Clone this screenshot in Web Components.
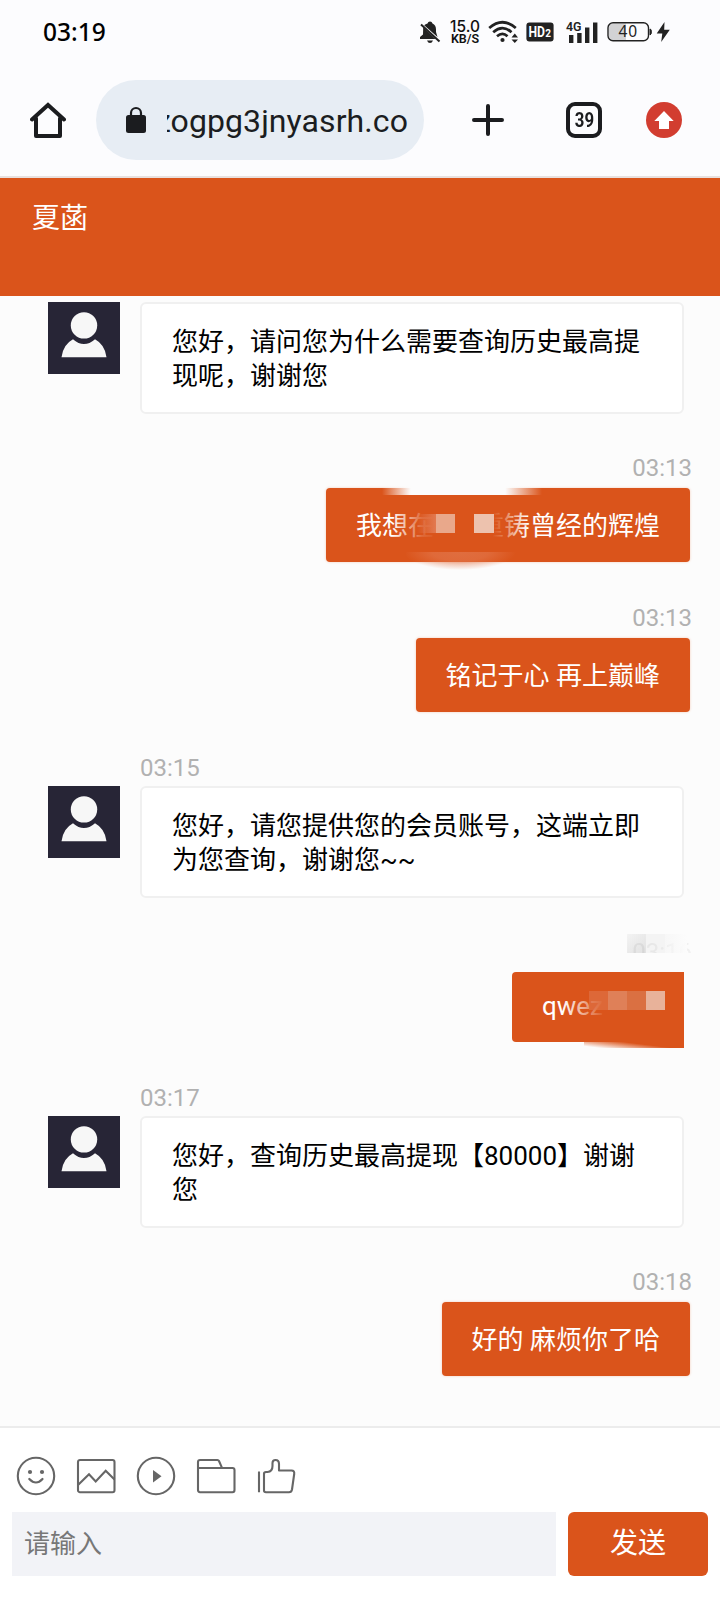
<!DOCTYPE html>
<html lang="zh-CN">
<head>
<meta charset="utf-8">
<title>夏菡</title>
<style>
html,body{margin:0;padding:0}
body{width:720px;height:1600px;overflow:hidden;background:#fcfcfc;font-family:Roboto,"Noto Sans CJK SC",sans-serif;color:#000}
chat-app{height:1600px}
</style>
</head>
<body>
<chat-app></chat-app>
<script>
function define(name, html){
  const t = document.createElement('template');
  t.innerHTML = html;
  customElements.define(name, class extends HTMLElement{
    constructor(){
      super();
      this.attachShadow({mode:'open'}).appendChild(t.content.cloneNode(true));
    }
    connectedCallback(){
      const time = this.shadowRoot.querySelector('.time');
      if(time) time.textContent = this.getAttribute('time') || '';
    }
  });
}

define('status-bar', `<style>
:host{display:flex;height:64px;box-sizing:border-box;padding:0 49px 0 43px;align-items:center;color:#222;background:#fcfcfe}
.clock{font:500 24.5px/64px "Noto Sans",sans-serif;color:#000;flex:1}
svg{display:block;flex:none;overflow:visible}
.rate{width:34px;margin:0 6px 0 7px;text-align:center;font:500 15.5px/13px Inter,sans-serif;color:#111}
.rate small{display:block;font:600 12.5px/11px Roboto,sans-serif}
</style>
<span class="clock">03:19</span>
<svg width="22" height="24" viewBox="0 0 22 24" fill="#222"><path d="M8.5 3.5 Q9 1.5 11 1.5 Q13 1.5 13.5 3.5 Q17 5 17 9.5 V12 L18.5 17 L5.2 5.2 Q6.5 4 8.5 3.5Z M4.2 7.2 L16.5 19 H1 V17 L4 14.5Z M8 20.5 H14 Q13 23 11 23 Q9 23 8 20.5Z"/><path d="M2 4.5 L20.5 21.5" stroke="#222" stroke-width="2"/></svg>
<div class="rate">15.0<small>KB/S</small></div>
<svg width="32" height="24" viewBox="0 0 32 24" fill="none" stroke="#222" stroke-width="2.7"><path d="M1.2 8 Q14.5 -3.5 27.8 8M5.2 12.2 Q14.5 4 23.5 12.2M9 16.3 Q14.5 11.5 19.5 16.3"/><circle cx="14.5" cy="20" r="2.1" fill="#222" stroke="none"/><path d="M23.5 17.5 L26.8 13.4 L30 17.5Z M23.5 19.5 H30 L26.8 23Z" fill="#222" stroke="none"/></svg>
<svg style="margin-left:6px" width="28" height="20" viewBox="0 0 28 20"><rect x=".4" y=".4" width="27.2" height="19" rx="3" fill="#222"/><text x="2.5" y="14.5" font-family="Roboto" font-weight="700" font-size="14.5" fill="#fff" textLength="16.5" lengthAdjust="spacingAndGlyphs">HD</text><text x="19.2" y="15" font-family="Roboto" font-weight="700" font-size="10" fill="#fff">2</text></svg>
<svg style="margin-left:12px" width="33" height="24" viewBox="0 0 33 24"><text x="0" y="11.3" font-family="Roboto" font-weight="600" font-size="13.5" fill="#222" textLength="15.5" lengthAdjust="spacingAndGlyphs">4G</text><path d="M3 15h4.4v8H3zM11.2 13h4.4v10h-4.4zM19 7.5h4.4v15.5H19zM27 2.5h4.4v20.5H27z" fill="#222"/></svg>
<svg style="margin-left:8px" width="45" height="22" viewBox="0 0 45 22"><path d="M6 2.5h13v17H6a4 4 0 0 1-4-4V6a4 4 0 0 1 4-3.5z" fill="#d2d2d4"/><rect x="1" y="1.8" width="40.5" height="18" rx="5" fill="none" stroke="#222" stroke-width="1.4"/><path d="M43 8q1.4 0 1.4 2.8T43 14z" fill="#222" stroke="#222"/><text x="11.5" y="16.2" font-family="Noto Sans" font-size="15.5" fill="#222" textLength="18.5">40</text></svg>
<svg style="margin-left:4px" width="15" height="22" viewBox="0 0 15 22"><path d="M8.5 1 L.7 12.5 H6.3 L5.2 21 L13.8 8.8 H8.2Z" fill="#222"/></svg>
`);

define('browser-bar', `<style>
:host{display:flex;height:114px;box-sizing:border-box;padding:16px 38px 16px 30px;border-bottom:2px solid #e8e0de;align-items:center;background:#fcfcfe}
svg{display:block;flex:none}
.url{display:flex;align-items:center;width:328px;height:80px;border-radius:40px;background:#e7edf4;margin-left:30px;box-sizing:border-box;padding:2px 16px 0 29px}
.url svg{margin-top:-2px}
.clip{margin-left:20px;width:241px;overflow:hidden;display:flex;justify-content:flex-end;font-size:32px;letter-spacing:.08px;line-height:44px;color:#1b1d21;white-space:nowrap}
.tabs{width:36px;height:36px;box-sizing:border-box;border:4px solid #1b1c1f;border-radius:9px;margin:0 44px 0 62px;text-align:center;font:700 20px/28px Roboto,sans-serif;color:#1b1c1f}
.tabs span{display:inline-block;transform:scaleX(.84)}
</style>
<svg width="36" height="36" viewBox="0 0 36 36" fill="none" stroke="#1b1c1f" stroke-width="4" stroke-linejoin="round" stroke-linecap="round"><path d="M6 16.5V34H30V16.5"/><path d="M2 17.5 L18 3 L34 17.5" stroke-linejoin="miter"/></svg>
<div class="url"><svg width="22" height="28" viewBox="0 0 22 28"><path d="M6 10V7a5 5 0 0 1 10 0V10" fill="none" stroke="#1b1c1f" stroke-width="2.2"/><rect x="1" y="9" width="20" height="18" rx="2.5" fill="#1b1c1f"/></svg>
<div class="clip"><span>zogpg3jnyasrh.co</span></div></div>
<svg style="margin-left:48px" width="32" height="32" viewBox="0 0 32 32" stroke="#1b1c1f" stroke-width="4" stroke-linecap="round"><path d="M16 2V30M2 16H30"/></svg>
<div class="tabs"><span>39</span></div>
<svg width="36" height="36" viewBox="0 0 36 36"><circle cx="18" cy="18" r="18" fill="#d23d30"/><path d="M18 9 L27.7 19 H23 V27 H13 V19 H8.3Z" fill="#fff"/></svg>
`);

define('chat-header', `<style>
:host{display:block;height:118px;box-sizing:border-box;padding:21px 32px;background:#da541b;color:#fff;font-size:28px;line-height:40px}
</style><slot></slot>`);

define('msg-in', `<style>
:host{display:grid;grid-template-columns:72px 544px;column-gap:20px;margin-left:48px;padding-top:44px}
.time{grid-column:2;height:30px;line-height:24px;font-size:24px;color:#b1b1b1}
svg{grid-column:1;display:block}
.bubble{grid-column:2;box-sizing:border-box;border:2px solid #f0f0f0;border-radius:6px;background:#fff;padding:21px 30px 19px;font-size:26px;line-height:34px;min-height:112px}
:host([first]){padding-top:6px}
:host([first]) .time{display:none}
</style>
<div class="time"></div>
<svg width="72" height="72" viewBox="0 0 72 72"><rect width="72" height="72" fill="#272536"/><circle cx="36" cy="23.4" r="13.2" fill="#f7f7f7"/><path d="M13.5 55.3 Q15 42.5 25 37.2 Q36 47 47 37.2 Q57 42.5 58.5 55.3Z" fill="#f7f7f7"/></svg>
<div class="bubble"><slot></slot></div>
`);

define('msg-out', `<style>
:host{display:flex;flex-direction:column;align-items:flex-end;padding:42px 30px 0 0}
:host([follow]){padding-top:44px}
.time{height:32px;line-height:24px;font-size:24px;color:#b1b1b1;margin-right:-2px}
.bubble{position:relative;background:#da541b;color:#fff;border-radius:4px;padding:21px 30px 19px;font-size:26px;line-height:34px;white-space:pre;box-shadow:0 0 2px 1px #f8e6de}
:host([masked]){padding-right:36px}
:host([masked]) .time{margin-right:-8px;color:#dcdcdc;-webkit-mask-image:linear-gradient(90deg,#000 30%,rgba(0,0,0,.3));clip-path:inset(0 0 19px 0)}
:host([masked]) .bubble{line-height:30px;padding:19px 30px 21px;width:112px;height:30px;border-radius:4px 0 0 4px;box-shadow:none}
</style>
<div class="time"></div>
<div class="bubble"><slot></slot></div>
`);

/* hidden-word mosaic drawn over the first outgoing bubble */
define('name-mosaic', `<style>
:host{display:inline-block;width:43px;margin-left:1px;height:1px}
i{position:absolute;display:block}
.top{left:56px;top:-3px;width:160px;height:10px;background:linear-gradient(90deg,#fcfcfc00,#fcfcfc 18%,#fcfcfc 77%,#fcfcfc00)}
.bottom{left:80px;top:64px;width:112px;height:19px;background:radial-gradient(ellipse 56px 18px at 54px 0,#e06f42ee 0,#e3784e99 50%,#e3855b00)}
.fade{left:66px;top:20px;width:136px;height:34px;background:linear-gradient(90deg,#da541b00,#da541bdd 22%,#da541b 36%,#da541b 74%,#da541baa 84%,#da541b00)}
.p{top:26px;width:19px;height:19px}
</style><i class="top"></i><i class="bottom"></i><i class="fade"></i><i class="p" style="left:91px;background:linear-gradient(90deg,#e2795000,#e27950)"></i><i class="p" style="left:110px;background:#e9a88b"></i><i class="p" style="left:148px;width:20px;background:#edc2ae"></i>`);

define('account-mosaic', `<style>
:host{display:inline;white-space:normal}
i{position:absolute;display:block}
.fade{left:50px;top:18px;width:90px;height:34px;background:linear-gradient(90deg,#da541b00,#da541bbb 36%,#da541b 48%)}
.p{top:19px;width:19px;height:19px}
.edge{left:72px;top:70px;width:100px;height:6px;background:linear-gradient(7deg,#da541b00 0,#da541b00 10%,#da541b 60%)}
.t{top:-38px;height:19px;width:19px}
</style><i class="fade"></i><i class="edge"></i><i class="p" style="left:77px;background:#e0774c99"></i><i class="p" style="left:96px;background:#df8058"></i><i class="p" style="left:115px;background:#da7042"></i><i class="p" style="left:134px;background:#e8b29a"></i><i class="t" style="left:115px;background:linear-gradient(135deg,#eee,#cfcfcf);opacity:.6"></i><i class="t" style="left:134px;background:#eeeeee99"></i><i class="t" style="left:153px;width:22px;background:linear-gradient(90deg,#f4f4f499,#fcfcfc)"></i>`);

define('chat-log', `<style>:host{display:block;height:1130px;overflow:hidden;background:#fcfcfc}</style><slot></slot>`);

define('chat-composer', `<style>
:host{display:block;height:174px;box-sizing:border-box;background:#fff;border-top:2px solid #ececec;padding:28px 12px 0}
.tools{display:flex;gap:20px;padding-left:4px;height:56px}
svg{display:block;width:40px;height:40px;fill:none;stroke:#666;stroke-width:2.1;stroke-linejoin:round}
.row{display:flex;gap:12px}
.field{width:544px;height:64px;box-sizing:border-box;padding-left:12px;background:#f2f3f7;color:#777;font-size:26px;line-height:64px}
.send{width:140px;height:64px;border-radius:6px;background:#da541b;color:#fff;text-align:center;font-size:28px;line-height:64px}
</style>
<div class="tools">
<svg viewBox="0 0 40 40"><circle cx="20" cy="20" r="18.2"/><path d="M13.3 23Q20 30 26.5 23" stroke-width="2.2" stroke-linecap="round"/><circle cx="14" cy="16" r="2.1" fill="#666" stroke="none"/><circle cx="26" cy="16" r="2.1" fill="#666" stroke="none"/></svg>
<svg viewBox="0 0 40 40"><rect x="2" y="4" width="36.5" height="32.2" rx="2"/><path d="M2 29 L13 18.2 L19.7 25.5 L29.7 14.8 L38.5 23.5" stroke-linejoin="miter"/></svg>
<svg viewBox="0 0 40 40"><circle cx="20" cy="20" r="18.2"/><path d="M17 14 L25.5 20.2 L17 26.4Z" fill="#666" stroke="none"/></svg>
<svg viewBox="0 0 40 40"><path d="M2 12V6Q2 4 4 4H21.5Q22.5 4 23 5L26 11.8M2 12H36.5Q38.5 12 38.5 14V34Q38.5 36.2 36.5 36.2H4Q2 36.2 2 34Z"/></svg>
<svg viewBox="0 0 40 40"><path d="M3 15.5V36.3M8 17.5Q8 16 10 16H11.5Q16.5 15.5 16.5 10V7Q16.5 4 19.5 4Q23 4 23 8V14.5H35.5Q38.7 14.5 38.2 18L36 33.5Q35.5 36.2 33 36.2H10Q8 36.2 8 34.5Z"/></svg>
</div>
<div class="row"><div class="field">请输入</div><div class="send">发送</div></div>
`);

define('chat-app', `<style>:host{display:block}</style>
<status-bar></status-bar><browser-bar></browser-bar>
<chat-header>夏菡</chat-header>
<chat-log>
<msg-in first>您好，请问您为什么需要查询历史最高提现呢，谢谢您</msg-in>
<msg-out time="03:13">我想在<name-mosaic></name-mosaic>重铸曾经的辉煌</msg-out>
<msg-out follow time="03:13">铭记于心 再上巅峰</msg-out>
<msg-in time="03:15">您好，请您提供您的会员账号，这端立即为您查询，谢谢您~~</msg-in>
<msg-out masked time="03:16">qwez<account-mosaic></account-mosaic></msg-out>
<msg-in time="03:17">您好，查询历史最高提现【80000】谢谢您</msg-in>
<msg-out time="03:18">好的 麻烦你了哈</msg-out>
</chat-log>
<chat-composer></chat-composer>`);
</script>
</body>
</html>
